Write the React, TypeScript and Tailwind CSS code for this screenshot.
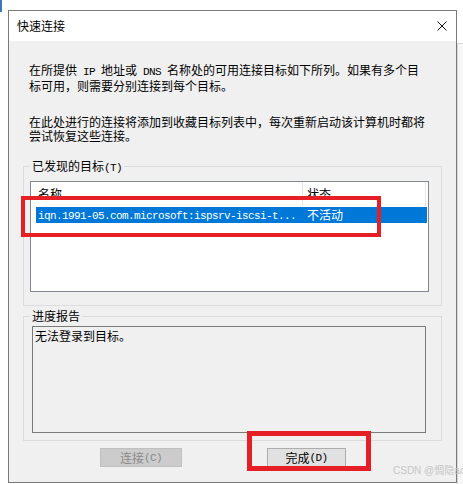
import React from "react";

const A = ({ children }: { children: React.ReactNode }) => (
  <span className="font-['Liberation_Mono',monospace] text-[11px] tracking-[-0.6px] whitespace-pre">
    {children}
  </span>
);

export default function App() {
  return (
    <div className="relative w-[463px] h-[484px] bg-white overflow-hidden font-['Noto_Sans_CJK_SC',sans-serif] text-[12px] text-black">
      {/* background desktop bits */}
      <div className="absolute left-0 top-0 w-[2px] h-[12px] bg-[#3d7ab8]" />
      <div className="absolute left-[457px] top-[43px] w-[6px] h-[441px] border-l border-t border-[#d6d6d6] bg-[#f7f7f7]" />

      <div className="relative ml-[8px] mt-[10px] w-[449px] h-[473px] border border-[#7a7a7a] bg-[#f0f0f0] flex flex-col">
        {/* title bar */}
        <div className="h-[30px] bg-white flex items-center justify-between pl-[8px] pr-[9px]">
          <span className="leading-[14px]">快速连接</span>
          <svg width="10" height="10" viewBox="0 0 10 10">
            <path d="M0.5 0.5 L9.5 9.5 M9.5 0.5 L0.5 9.5" stroke="#111" strokeWidth="1" fill="none" />
          </svg>
        </div>

        {/* body */}
        <div className="flex flex-col px-[14px]">
          <div className="mt-[22px] ml-[6px] leading-[14px] whitespace-nowrap">
            <div>
              在所提供<A> IP </A>地址或<A> DNS </A>名称处的可用连接目标如下所列。如果有多个目
            </div>
            <div>标可用，则需要分别连接到每个目标。</div>
          </div>
          <div className="mt-[22px] ml-[6px] leading-[14px] whitespace-nowrap">
            <div>在此处进行的连接将添加到收藏目标列表中，每次重新启动该计算机时都将</div>
            <div>尝试恢复这些连接。</div>
          </div>

          {/* group 1 */}
          <div className="relative mt-[16px] pt-[7px]">
            <span className="absolute top-0 left-[7px] px-[2px] bg-[#f0f0f0] leading-[14px]">
              已发现的目标<A>(T)</A>
            </span>
            <div className="h-[140px] border border-[#dcdcdc] pt-[14px] pl-[6px]">
              <div className="w-[399px] h-[111px] border border-[#828790] bg-white">
                <div className="h-[24px] flex">
                  <div className="w-[272px] border-r border-[#e5e5e5] pl-[7px] flex items-center leading-[14px]">
                    名称
                  </div>
                  <div className="w-[123px] border-r border-[#e5e5e5] pl-[4px] flex items-center leading-[14px]">
                    状态
                  </div>
                </div>
                <div className="mt-[1px] ml-[5px] w-[391px] h-[16px] bg-[#0078d7] text-white flex items-center leading-[14px]">
                  <div className="w-[266px] pl-[2px] whitespace-nowrap">
                    <A>iqn.1991-05.com.microsoft:ispsrv-iscsi-t...</A>
                  </div>
                  <div className="pl-[5px]">不活动</div>
                </div>
              </div>
            </div>
          </div>

          {/* group 2 */}
          <div className="relative mt-[3px] pt-[7px]">
            <span className="absolute top-0 left-[7px] px-[2px] bg-[#f0f0f0] leading-[14px]">
              进度报告
            </span>
            <div className="h-[125px] border border-[#dcdcdc] pt-[9px] pl-[8px]">
              <div className="w-[394px] h-[107px] border border-[#7a7a7a] bg-[#f0f0f0] px-[2px] pt-[2px] leading-[14px]">
                无法登录到目标。
              </div>
            </div>
          </div>

          {/* buttons */}
          <div className="mt-[7px] flex">
            <div className="ml-[77px] w-[82px] h-[19px] border border-[#bfbfbf] bg-[#cccccc] text-[#8a8a8a] flex items-center justify-center leading-[14px]">
              连接<A>(C)</A>
            </div>
            <div className="ml-[85px] w-[79px] h-[19px] border border-[#adadad] bg-[#e1e1e1] flex items-center justify-center leading-[14px]">
              完成<A>(D)</A>
            </div>
          </div>
        </div>
      </div>

      {/* annotations */}
      <div className="absolute left-[21px] top-[196px] w-[360px] h-[41px] border-4 border-[#e61e25]" />
      <div className="absolute left-[247px] top-[431px] w-[124px] h-[40px] border-[5px] border-[#e61e25]" />
      <div className="absolute left-[393px] top-[464px] text-[10px] leading-[14px] text-[#c6c6c6] font-['Liberation_Sans','Noto_Sans_CJK_SC',sans-serif] whitespace-nowrap">
        CSDN @惆隐aa
      </div>
    </div>
  );
}
